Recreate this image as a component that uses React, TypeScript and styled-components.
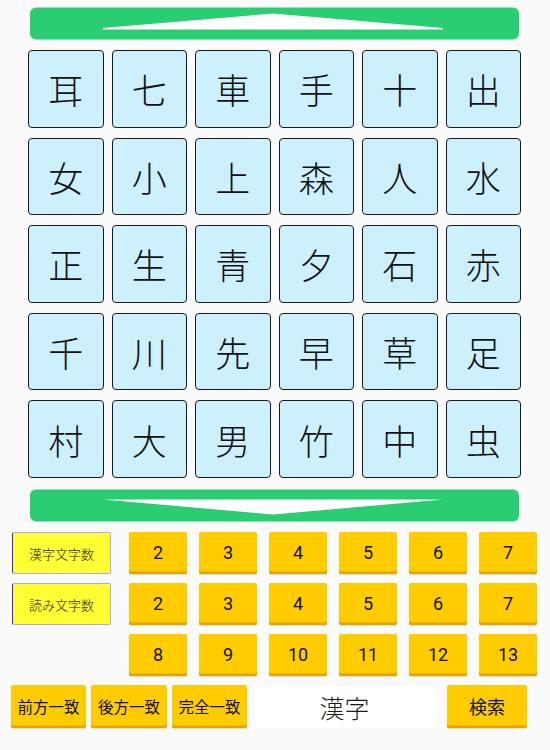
import React from "react";
import styled, { createGlobalStyle } from "styled-components";

const Global = createGlobalStyle`
  html, body { margin: 0; padding: 0; background: #fafafa; }
  body { font-family: "Noto Sans CJK JP", "Noto Sans", sans-serif; }
`;

const Page = styled.div`
  width: 550px;
  height: 750px;
  background: #fafafa;
  display: flex;
  flex-direction: column;
`;

const BannerWrap = styled.div<{ $mt: number }>`
  margin: ${(p) => p.$mt}px 0 0 29px;
  width: 491px;
  height: 33px;
  display: block;
  svg { display: block; }
`;

const TileGrid = styled.div`
  margin: 10px 0 0 28px;
  width: 493px;
  height: 428px;
  display: grid;
  grid-template-columns: repeat(6, 1fr);
  grid-template-rows: repeat(5, 1fr);
  column-gap: 8px;
  row-gap: 10px;
`;

const Tile = styled.div`
  box-sizing: border-box;
  background: #cdf0fe;
  border: 1.5px solid #1a1a1a;
  border-radius: 4px;
  display: flex;
  align-items: center;
  justify-content: center;
  font-family: "Noto Sans CJK JP", sans-serif;
  font-weight: 300;
  font-size: 35px;
  color: #111;
  line-height: 1;
`;

const Controls = styled.div`
  margin: 10px 0 0 0;
  display: flex;
  flex-direction: column;
  gap: 9px;
`;

const Row = styled.div`
  display: flex;
  align-items: stretch;
  height: 42px;
`;

const LabelSlot = styled.div`
  width: 99px;
  margin-left: 12px;
  margin-right: 18px;
  display: flex;
`;

const LabelButton = styled.div`
  box-sizing: border-box;
  flex: 1;
  background: #ffff33;
  border: 1px solid #a8a8ff;
  border-left: 1.5px solid #2a2aff;
  border-radius: 2px;
  display: flex;
  align-items: center;
  justify-content: center;
  font-family: "Noto Sans CJK JP", sans-serif;
  font-weight: 300;
  font-size: 13px;
  color: #222;
`;

const NumGroup = styled.div`
  display: flex;
  gap: 12px;
`;

const YellowButton = styled.div<{ $w: number; $fs: number }>`
  box-sizing: border-box;
  width: ${(p) => p.$w}px;
  background: #ffcc00;
  border-radius: 2px;
  box-shadow: inset 0 -2.5px 0 #e2a500, 0 0.5px 1px rgba(0,0,0,0.12);
  display: flex;
  align-items: center;
  justify-content: center;
  padding-bottom: 2px;
  font-family: Roboto, "Noto Sans CJK JP", sans-serif;
  font-size: ${(p) => p.$fs}px;
  color: #111;
`;

const BottomRow = styled.div`
  display: flex;
  height: 43px;
  margin-left: 11px;
`;

const MatchGroup = styled.div`
  display: flex;
  gap: 5px;
`;

const Field = styled.div`
  margin-left: 6px;
  width: 183px;
  background: #ffffff;
  display: flex;
  align-items: center;
  justify-content: center;
  font-family: "Noto Sans CJK JP", sans-serif;
  font-weight: 300;
  font-size: 25px;
  color: #1a1a1a;
`;

const SearchSlot = styled.div`
  margin-left: 11px;
  display: flex;
`;

const GREEN = "#2bcd72";

const Banner: React.FC<{ dir: "up" | "down"; mt: number }> = ({ dir, mt }) => (
  <BannerWrap $mt={mt}>
    <svg width="491" height="33" viewBox="0 0 491 33">
      <defs>
        <filter id={`soft-${dir}`} x="-2%" y="-10%" width="104%" height="120%">
          <feGaussianBlur stdDeviation="0.6" />
        </filter>
      </defs>
      <rect x="1" y="0.5" width="489" height="32" rx="6" ry="6" fill={GREEN} filter={`url(#soft-${dir})`} />
      {dir === "up" ? (
        <polygon points="74,21 244,6.5 414,21 414,22.5 74,22.5" fill="#ffffff" />
      ) : (
        <polygon points="74,10.5 414,10.5 244,25.5" fill="#ffffff" />
      )}
    </svg>
  </BannerWrap>
);

const kanji = [
  "耳", "七", "車", "手", "十", "出",
  "女", "小", "上", "森", "人", "水",
  "正", "生", "青", "夕", "石", "赤",
  "千", "川", "先", "早", "草", "足",
  "村", "大", "男", "竹", "中", "虫",
];

const rows: { label?: string; nums: string[] }[] = [
  { label: "漢字文字数", nums: ["2", "3", "4", "5", "6", "7"] },
  { label: "読み文字数", nums: ["2", "3", "4", "5", "6", "7"] },
  { nums: ["8", "9", "10", "11", "12", "13"] },
];

export default function App() {
  return (
    <Page>
      <Global />
      <Banner dir="up" mt={7} />
      <TileGrid>
        {kanji.map((k, i) => (
          <Tile key={i}>{k}</Tile>
        ))}
      </TileGrid>
      <Banner dir="down" mt={11} />
      <Controls>
        {rows.map((r, i) => (
          <Row key={i}>
            <LabelSlot>{r.label && <LabelButton>{r.label}</LabelButton>}</LabelSlot>
            <NumGroup>
              {r.nums.map((n) => (
                <YellowButton key={n} $w={58} $fs={18}>
                  {n}
                </YellowButton>
              ))}
            </NumGroup>
          </Row>
        ))}
        <BottomRow>
          <MatchGroup>
            <YellowButton $w={75} $fs={15.5}>前方一致</YellowButton>
            <YellowButton $w={76} $fs={15.5}>後方一致</YellowButton>
            <YellowButton $w={75} $fs={15.5}>完全一致</YellowButton>
          </MatchGroup>
          <Field>漢字</Field>
          <SearchSlot>
            <YellowButton $w={80} $fs={18}>検索</YellowButton>
          </SearchSlot>
        </BottomRow>
      </Controls>
    </Page>
  );
}
